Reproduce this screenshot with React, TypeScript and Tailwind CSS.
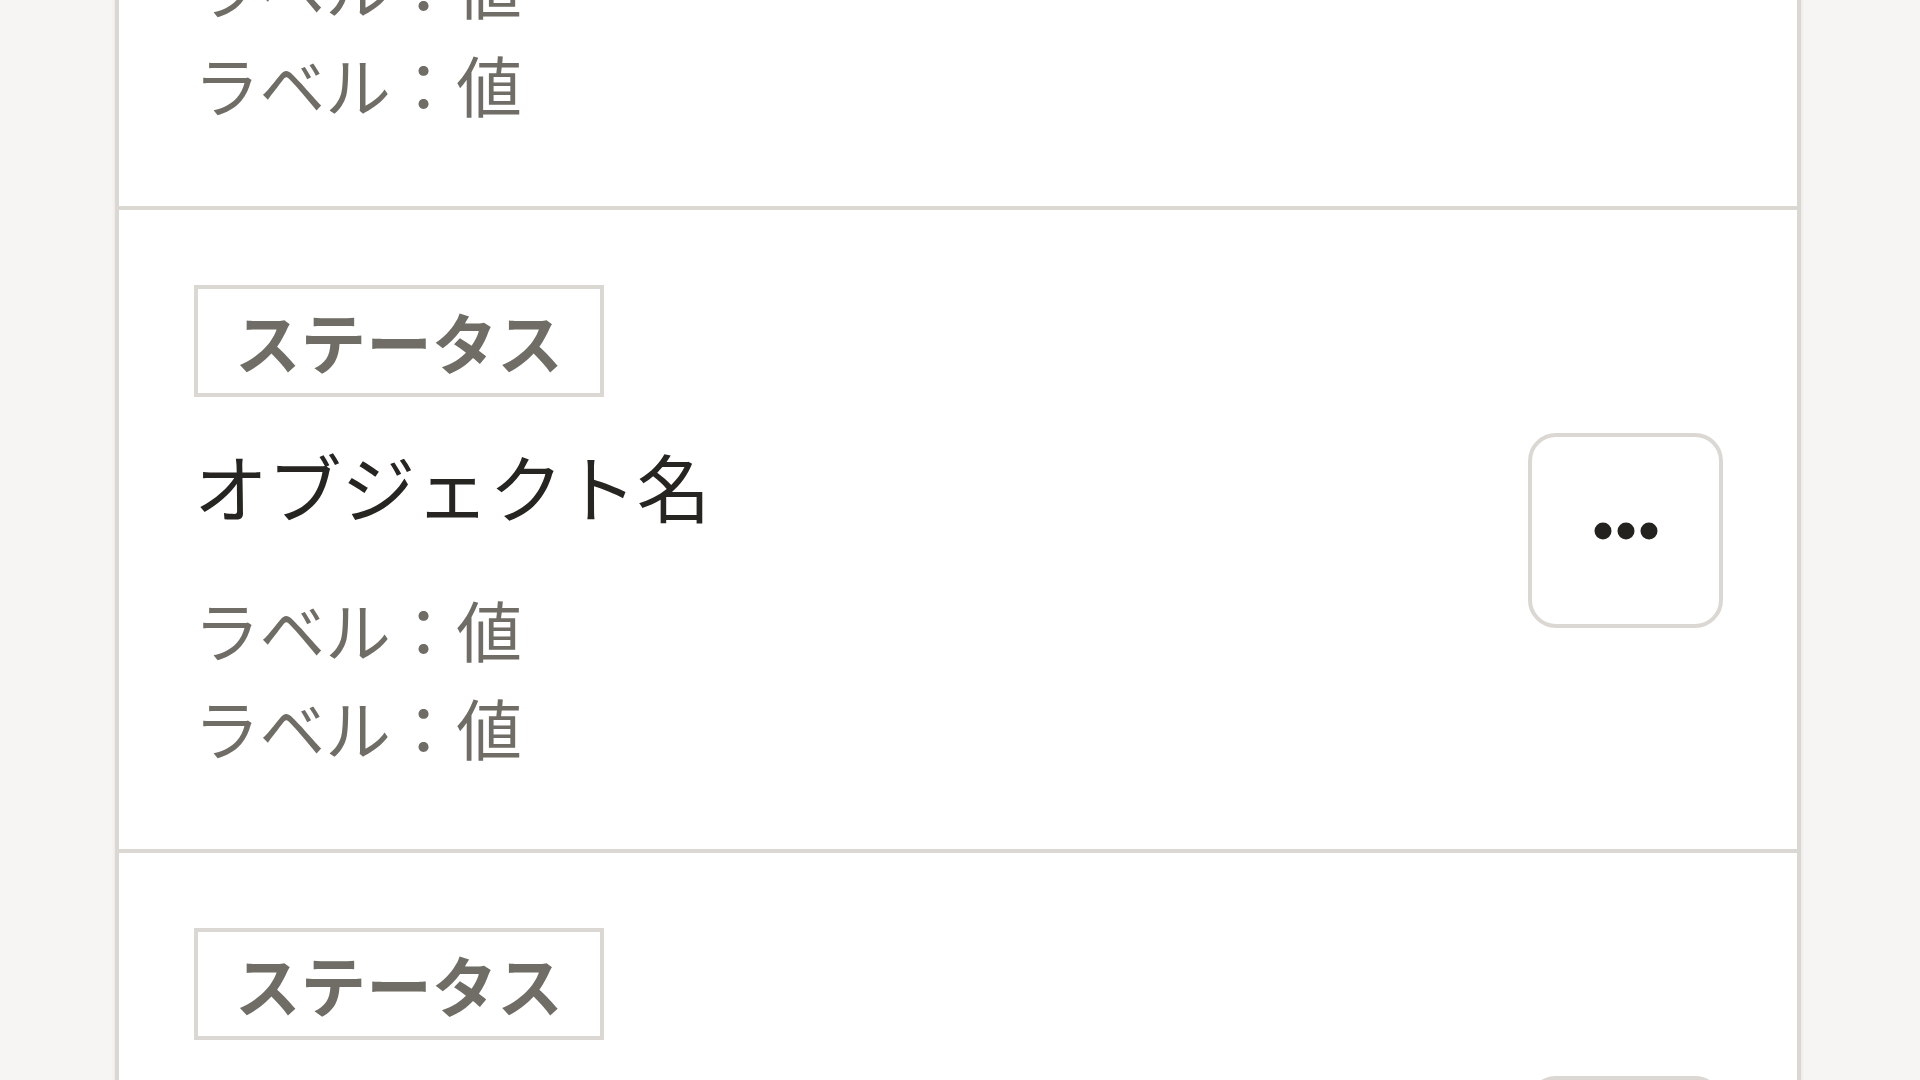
const items = [1, 2, 3, 4];

function MoreIcon() {
  return (
    <svg width="64" height="20" viewBox="0 0 64 20" className="text-[#23221e]">
      <circle cx="9" cy="10" r="8.5" fill="currentColor" />
      <circle cx="32" cy="10" r="8.5" fill="currentColor" />
      <circle cx="55" cy="10" r="8.5" fill="currentColor" />
    </svg>
  );
}

function ObjectRow() {
  return (
    <li className="flex items-center justify-between border-b-4 border-[#dbd8d4] pl-[75px] pr-[74px] pt-[75px] pb-[72px]">
      <div className="flex flex-col items-start">
        <span className="flex h-[112px] items-center border-4 border-[#dbd8d4] px-[37px] text-[65.6px] font-bold leading-none text-[#6f6d65]">
          ステータス
        </span>
        <h3 className="mt-[37px] mb-[44px] text-[73.8px] leading-[102px] font-normal text-[#262521]">
          オブジェクト名
        </h3>
        <dl className="text-[65.6px] leading-[98.4px] text-[#6f6d65]">
          <div>
            <dt className="inline">ラベル</dt>
            <dd className="inline">：値</dd>
          </div>
          <div>
            <dt className="inline">ラベル</dt>
            <dd className="inline">：値</dd>
          </div>
        </dl>
      </div>
      <button
        type="button"
        aria-label="メニュー"
        className="flex h-[195px] w-[195px] shrink-0 items-center justify-center rounded-[28px] border-4 border-[#dbd8d4] bg-white"
      >
        <MoreIcon />
      </button>
    </li>
  );
}

export default function App() {
  return (
    <div
      className="h-[1080px] overflow-hidden bg-[#f6f5f3]"
      style={{ fontFamily: '"Noto Sans CJK JP", "Noto Sans", sans-serif' }}
    >
      <div className="ml-[115px] w-[1686px] border-x-4 border-[#dbd8d4] bg-white shadow-[0_0_4px_rgba(0,0,0,0.08)]">
        <ul className="-mt-[433px]">
          {items.map((i) => (
            <ObjectRow key={i} />
          ))}
        </ul>
      </div>
    </div>
  );
}
